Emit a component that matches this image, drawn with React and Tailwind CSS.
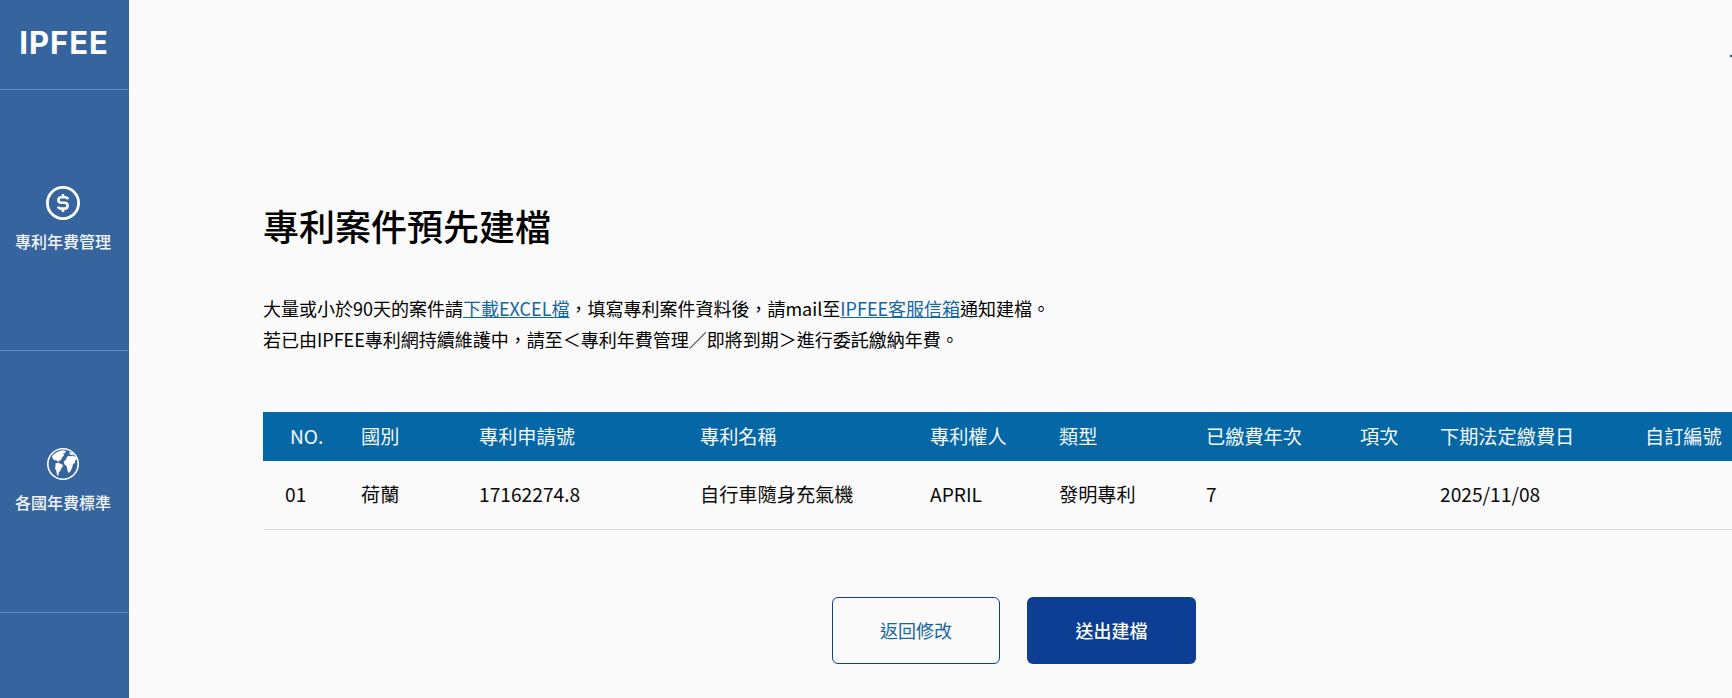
import React from "react";

const cols = ["w-[98px]", "w-[118px]", "w-[221px]", "w-[230px]", "w-[129px]", "w-[147px]", "w-[154px]", "w-[80px]", "w-[205px]", "w-[87px]"];
const heads = ["NO.", "國別", "專利申請號", "專利名稱", "專利權人", "類型", "已繳費年次", "項次", "下期法定繳費日", "自訂編號"];
const cells = ["01", "荷蘭", "17162274.8", "自行車隨身充氣機", "APRIL", "發明專利", "7", "", "2025/11/08", ""];

function Dollar() {
  return (
    <svg width="34" height="34" viewBox="0 0 34 34" fill="none" stroke="white">
      <circle cx="17" cy="17" r="15.6" strokeWidth="2.8" />
      <path d="M22 13.200c-.5-1.300-1.600-2-3-2h-3.600c-1.800 0-3 1.200-3 2.800s1.200 2.800 3 2.800h3.200c1.800 0 3 1.200 3 2.900s-1.200 2.900-3 2.900h-3.600c-1.500 0-2.500-.7-3-2" strokeWidth="2.600" />
      <path d="M17 8v3.200M17 22.600v3.400" strokeWidth="2.600" />
    </svg>
  );
}

function Globe() {
  return (
    <svg width="34" height="34" viewBox="0 0 34 34">
      <circle cx="17" cy="17" r="16" fill="white" />
      <circle cx="17" cy="17" r="14.400" fill="#36649f" />
      <path d="M6 9.500C8 6.500 12 3.600 17 3.200l3.200.8-1.400 2.200-1.700.6 1 1.800-2.200 2-.6 2.200-2 .6-1.300 1.600-1.200-1.400-2.200-.4-1.800-1.400z" fill="white" />
      <path d="M9.500 16.200l3.300-.4 2.400 1.400 1.400.4.200 1.900-1.800 2.200-.6 2-1.500 1.800-.7 3.300-1.200-.6-.7-4.200-1.200-2.400.4-2.800z" fill="white" />
      <path d="M23.500 4.800l2.700 1.200 1.600 1.500-1.700.7-2.500-1zM20.500 10.400l2-1.700 2.200.5 2.600-.4 2.500 1.300.8 2.400-1.800 1.500.4 1.800-2.100 1.300-.8 2.800-1.200 3.400-1.800 2.200h-1.300l-.8-3.600-.7-3.200-1.600-.6-1.100-2.600.9-2.100 1.600-1z" fill="white" />
    </svg>
  );
}

function NavItem({ icon, label, height }) {
  return (
    <div className={`${height} flex flex-col items-center justify-center gap-[10px] border-b border-[#5f87bc] pb-[3px] pr-[3px]`}>
      {icon}
      <span className="text-[16px] font-medium leading-[22px] text-[#f2f5f9]">{label}</span>
    </div>
  );
}

export default function App() {
  return (
    <div className="flex h-screen overflow-hidden bg-[#fafafa] font-['Noto_Sans_CJK_TC','Noto_Sans',sans-serif] text-[#0a0a0a]">
      <aside className="w-[129px] shrink-0 bg-[#36649f]">
        <div className="h-[90px] border-b border-[#5f87bc] flex items-center justify-center pb-[4px] pr-[1px]">
          <span className="font-['Inter',sans-serif] font-bold text-[31px] leading-none text-white tracking-[1px]">IPFEE</span>
        </div>
        <NavItem icon={<Dollar />} label="專利年費管理" height="h-[261px]" />
        <NavItem icon={<Globe />} label="各國年費標準" height="h-[262px]" />
      </aside>
      <main className="relative flex-1 min-w-0 pl-[134px] pt-[198px]">
        <div className="absolute right-0 top-[55px] w-[2px] h-[2px] bg-[#24467f]" />
        <h1 className="text-[36px] font-medium leading-[54px] text-black">專利案件預先建檔</h1>
        <div className="mt-[41px] text-[18px] leading-[31px] text-black">
          <p>大量或小於90天的案件請<a className="text-[#15669f] underline">下載EXCEL檔</a>，填寫專利案件資料後，請mail至<a className="text-[#15669f] underline">IPFEE客服信箱</a>通知建檔。</p>
          <p>若已由IPFEE專利網持續維護中，請至＜專利年費管理／即將到期＞進行委託繳納年費。</p>
        </div>
        <div className="mt-[57px] w-[1469px]">
          <table className="table-fixed w-full border-collapse">
            <colgroup>
              {cols.map((c) => <col key={c} className={c} />)}
            </colgroup>
            <thead>
              <tr className="h-[49px] bg-[#0667a6] text-[#f5f9fc]">
                {heads.map((h, i) => (
                  <th key={h} className={`p-0 text-left font-normal text-[19.200px] whitespace-nowrap ${i === 0 ? "pl-[27px]" : ""}`}>{h}</th>
                ))}
              </tr>
            </thead>
            <tbody>
              <tr className="h-[68px] border-b border-[#d9d9d9]">
                {cells.map((c, i) => (
                  <td key={i} className={`p-0 text-[19.200px] whitespace-nowrap ${i === 0 ? "pl-[22px]" : ""}`}>{c}</td>
                ))}
              </tr>
            </tbody>
          </table>
        </div>
        <div className="mt-[67px] ml-[569px] flex gap-[27px]">
          <button className="w-[168px] h-[67px] rounded-[6px] border border-[#0c3e94] text-[18px] text-[#15669f]">返回修改</button>
          <button className="w-[169px] h-[67px] rounded-[6px] bg-[#0c3e94] text-[18px] font-medium text-white">送出建檔</button>
        </div>
      </main>
    </div>
  );
}
